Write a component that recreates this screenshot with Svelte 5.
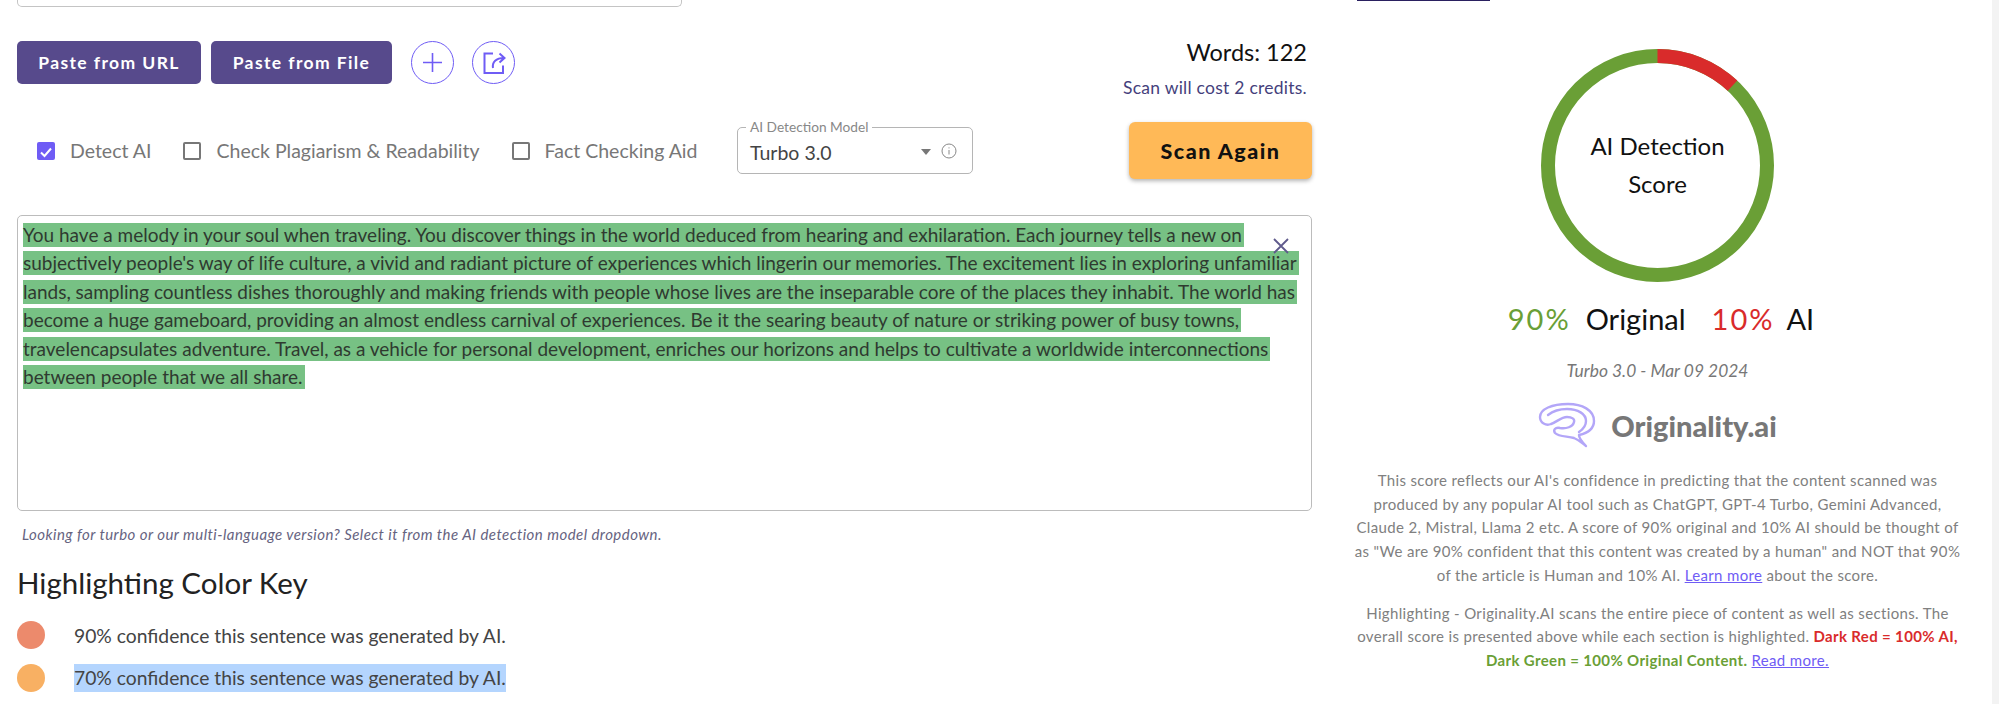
<script>
  const lines = [
    "You have a melody in your soul when traveling. You discover things in the world deduced from hearing and exhilaration. Each journey tells a new on",
    "subjectively people's way of life culture, a vivid and radiant picture of experiences which lingerin our memories. The excitement lies in exploring unfamiliar",
    "lands, sampling countless dishes thoroughly and making friends with people whose lives are the inseparable core of the places they inhabit. The world has",
    "become a huge gameboard, providing an almost endless carnival of experiences. Be it the searing beauty of nature or striking power of busy towns,",
    "travelencapsulates adventure. Travel, as a vehicle for personal development, enriches our horizons and helps to cultivate a worldwide interconnections",
    "between people that we all share."
  ];
  const options = [
    { label: "Detect AI", checked: true },
    { label: "Check Plagiarism & Readability", checked: false },
    { label: "Fact Checking Aid", checked: false }
  ];
  // donut: red slice from the top
  const r = 109.5;
  const circ = 2 * Math.PI * r;
</script>

<div class="page">
  <main class="left">
    <div class="top-box"></div>

    <div class="toolbar">
      <div class="actions">
        <button class="paste url">Paste from URL</button>
        <button class="paste file">Paste from File</button>
        <button class="round plus" aria-label="Add">
          <svg viewBox="0 0 43 43" width="43" height="43"><path d="M21.5 12v19M12 21.5h19" /></svg>
        </button>
        <button class="round share" aria-label="Share">
          <svg viewBox="0 0 43 43" width="43" height="43">
            <path d="M21 12.5h-8.5v19.5h18.5v-7.5" />
            <path d="M21 27c-1-6 3-10 11-10M27.5 12.5l5 4.5-5 4.5" />
          </svg>
        </button>
      </div>
      <div class="counts">
        <div class="words">Words: 122</div>
        <div class="cost">Scan will cost 2 credits.</div>
      </div>
    </div>

    <div class="options">
      <div class="checks">
        {#each options as o}
          <label class="check">
            <span class="box" class:on={o.checked}>
              {#if o.checked}
                <svg viewBox="0 0 18 18" width="18" height="18"><path d="M4 9.5l3.5 3.5L14 5.5" /></svg>
              {/if}
            </span>
            {o.label}
          </label>
        {/each}
      </div>
      <div class="model">
        <span class="legend">AI Detection Model</span>
        <span class="value">Turbo 3.0</span>
        <span class="caret"></span>
        <svg class="info" viewBox="0 0 16 16" width="16" height="16">
          <circle cx="8" cy="8" r="7" />
          <path d="M8 7v4.5M8 4.4v1" />
        </svg>
      </div>
      <button class="scan">Scan Again</button>
    </div>

    <div class="editor">
      <svg class="close" viewBox="0 0 16 16" width="16" height="16"><path d="M1 1l14 14M15 1L1 15" /></svg>
      {#each lines as line}
        <div class="line"><span>{line}</span></div>
      {/each}
    </div>

    <p class="hint">Looking for turbo or our multi-language version? Select it from the AI detection model dropdown.</p>

    <h2>Highlighting Color Key</h2>
    <div class="key">
      <span class="dot red"></span>
      <span>90% confidence this sentence was generated by AI.</span>
    </div>
    <div class="key">
      <span class="dot orange"></span>
      <span class="selected">70% confidence this sentence was generated by AI.</span>
    </div>
  </main>

  <aside class="right">
    <div class="top-rule"></div>
    <div class="donut">
      <svg viewBox="0 0 233 233" width="233" height="233">
        <circle cx="116.5" cy="116.5" r={r} class="ring green" />
        <circle cx="116.5" cy="116.5" r={r} class="ring red" stroke-dasharray="{circ * 0.12} {circ}" />
      </svg>
      <div class="donut-label">AI Detection<br />Score</div>
    </div>
    <div class="score">
      <span class="pct g">90%</span><span class="name">Original</span>
      <span class="pct r">10%</span><span class="name">AI</span>
    </div>
    <div class="stamp">Turbo 3.0 - Mar 09 2024</div>
    <div class="logo">
      <svg viewBox="0 0 58 46" width="58" height="46">
        <path d="M48 44C44 40 41 36 41 33 50 31 56 27 56 19 56 8 44 2 30 2 14 2 2 7 2 15 2 21 8 24 13 22 19 20 23 15 29 15 34 15 37 17 36 20 35 25 28 27 22 26 17 25 15 28 17 31 21 35 30 34 36 36 41 38 44 41 48 44Z" />
        <path d="M10 13C15 9 22 7 29 7 40 7 48 12 48 19 48 25 44 28 41 30" />
      </svg>
      <span>Originality.ai</span>
    </div>
    <p class="blurb first">This score reflects our AI's confidence in predicting that the content scanned was<br />produced by any popular AI tool such as ChatGPT, GPT-4 Turbo, Gemini Advanced,<br />Claude 2, Mistral, Llama 2 etc. A score of 90% original and 10% AI should be thought of<br />as "We are 90% confident that this content was created by a human" and NOT that 90%<br />of the article is Human and 10% AI. <a href="#more">Learn more</a> about the score.</p>
    <p class="blurb">Highlighting - Originality.AI scans the entire piece of content as well as sections. The<br />overall score is presented above while each section is highlighted. <b class="r">Dark Red = 100% AI,</b><br /><b class="g">Dark Green = 100% Original Content.</b> <a href="#more">Read more.</a></p>
  </aside>
  <div class="scrollbar"></div>
</div>

<style>
  :global(body) {
    background: #fff;
    overflow: hidden;
  }

  .page {
    display: flex;
    height: 704px;
    width: 1999px;
    font-family: "Lato", "Liberation Sans", sans-serif;
    color: #333;
    overflow: hidden;
  }

  .left {
    width: 1295px;
    margin-left: 17px;
    flex: none;
  }

  .top-box {
    height: 7px;
    width: 665px;
    border: 1px solid #c4c4c4;
    border-top: none;
    border-radius: 0 0 5px 5px;
    box-sizing: border-box;
  }

  .toolbar {
    display: flex;
    justify-content: space-between;
    margin-top: 34px;
    height: 81px;
  }

  .actions {
    display: flex;
    gap: 10px;
    height: 43px;
  }

  button {
    font-family: inherit;
    cursor: pointer;
  }

  .paste {
    height: 43px;
    background: #574a8c;
    color: #fff;
    border: none;
    border-radius: 5px;
    font-size: 17.5px;
    font-weight: 700;
    letter-spacing: 1.4px;
    padding: 0;
  }
  .url { width: 184px; }
  .file { width: 181px; }

  .round {
    width: 43px;
    height: 43px;
    padding: 0;
    border: 1px solid #6f5cf5;
    border-radius: 50%;
    background: #fff;
    box-sizing: border-box;
    display: flex;
    align-items: center;
    justify-content: center;
  }
  .plus { margin-left: 9px; }
  .share { margin-left: 8px; }
  .round svg { flex: none; }
  .round path {
    fill: none;
    stroke: #6f5cf5;
    stroke-width: 1.6;
  }
  .share path { stroke-width: 2; }

  .counts {
    text-align: right;
    padding-right: 5px;
  }
  .words {
    font-size: 23.5px;
    line-height: 30px;
    margin-top: -4px;
    color: #111;
  }
  .cost {
    font-size: 17.5px;
    line-height: 20px;
    letter-spacing: 0.25px;
    margin-top: 11px;
    color: #453f7c;
  }

  .options {
    display: flex;
    align-items: center;
    height: 57px;
  }
  .checks {
    display: flex;
    margin-left: 20px;
    width: 700px;
    gap: 32px;
  }
  .check {
    display: flex;
    align-items: center;
    gap: 15px;
    font-size: 19.5px;
    color: #777;
  }
  .box {
    width: 18px;
    height: 18px;
    box-sizing: border-box;
    border: 2px solid #777;
    border-radius: 2px;
    flex: none;
  }
  .box.on {
    background: #6f5cf5;
    border: none;
  }
  .box path {
    fill: none;
    stroke: #fff;
    stroke-width: 2;
  }

  .model {
    position: relative;
    width: 236px;
    height: 47px;
    box-sizing: border-box;
    border: 1px solid #b5b5b5;
    border-radius: 5px;
    display: flex;
    align-items: center;
    padding: 4px 0 0 12px;
    margin-top: -1px;
  }
  .legend {
    position: absolute;
    top: -9px;
    left: 8px;
    background: #fff;
    padding: 0 4px;
    font-size: 13.7px;
    line-height: 16px;
    color: #888;
  }
  .value {
    font-size: 19.5px;
    color: #444;
  }
  .caret {
    position: absolute;
    right: 41px;
    top: 21px;
    border: 5px solid transparent;
    border-top: 6px solid #777;
    border-bottom: none;
  }
  .info {
    position: absolute;
    right: 15px;
    top: 15px;
    fill: none;
    stroke: #888;
    stroke-width: 1;
  }

  .scan {
    margin-left: 156px;
    width: 183px;
    height: 57px;
    border: none;
    border-radius: 6px;
    background: #ffb957;
    color: #111;
    font-size: 21.5px;
    font-weight: 900;
    letter-spacing: 1.5px;
    box-shadow: 0 2px 4px rgba(0, 0, 0, 0.3);
  }

  .editor {
    position: relative;
    margin-top: 36px;
    width: 1295px;
    height: 296px;
    box-sizing: border-box;
    border: 1px solid #bcbcbc;
    border-radius: 5px;
    padding: 7px 5px;
    font-size: 19px;
    color: #2f3a30;
  }
  .line {
    height: 28.4px;
    white-space: nowrap;
    line-height: 24px;
  }
  .line span {
    display: inline-block;
    background: #77c184;
    height: 24px;
    padding: 0 2px 0 0;
  }
  .close {
    position: absolute;
    right: 22px;
    top: 22px;
    fill: none;
    stroke: #5f5a8c;
    stroke-width: 1.8;
    z-index: 1;
  }

  .hint {
    margin: 14px 0 0 5px;
    font-size: 15px;
    line-height: 18px;
    font-style: italic;
    color: #66637f;
    letter-spacing: 0.45px;
  }

  h2 {
    margin: 22px 0 0 0;
    font-size: 29.5px;
    font-weight: 400;
    line-height: 36px;
    color: #222;
  }

  .key {
    display: flex;
    align-items: center;
    gap: 29px;
    height: 28px;
    font-size: 19.3px;
    color: #444;
    margin-top: 15px;
  }
  h2 + .key { margin-top: 20px; }
  .dot {
    width: 28px;
    height: 28px;
    border-radius: 50%;
    flex: none;
  }
  .dot.red { background: #ec8a6c; }
  .dot.orange { background: #f8b063; }
  .selected {
    background: #b4d5fe;
    line-height: 28px;
  }

  .right {
    position: relative;
    width: 641px;
    margin-left: 25px;
    flex: none;
    text-align: center;
  }
  .top-rule {
    width: 133px;
    height: 2px;
    background: #2a2060;
    margin-left: 20px;
    position: absolute;
    top: -1px;
  }
  .donut {
    position: relative;
    width: 233px;
    height: 233px;
    margin: 49px auto 0;
  }
  .ring {
    fill: none;
    stroke-width: 14;
    transform: rotate(-90deg);
    transform-origin: center;
  }
  .ring.green { stroke: #6a9f36; }
  .ring.red { stroke: #d92b2b; }
  .donut-label {
    position: absolute;
    inset: 0;
    display: flex;
    align-items: center;
    justify-content: center;
    text-align: center;
    font-size: 24px;
    line-height: 38px;
    color: #111;
    padding-bottom: 2px;
    box-sizing: border-box;
  }

  .score {
    display: flex;
    justify-content: center;
    margin-top: 19px;
    padding-left: 7px;
    font-size: 29px;
    line-height: 36px;
    color: #111;
  }
  .pct { letter-spacing: 2px; }
  .score .name { margin-left: 15px; margin-right: 26px; }
  .score .name:last-child { margin-right: 0; margin-left: 12px; }
  .g { color: #6a9f36; }
  .r { color: #d92b2b; }

  .stamp {
    margin-top: 24px;
    font-size: 17.4px;
    line-height: 20px;
    font-style: italic;
    color: #777;
  }

  .logo {
    display: flex;
    justify-content: center;
    align-items: center;
    gap: 15px;
    margin-top: 21px;
    height: 46px;
    font-size: 29px;
    font-weight: 900;
    color: #777;
  }
  .logo path {
    fill: none;
    stroke: #b3a6f8;
    stroke-width: 2.4;
    stroke-linecap: round;
    stroke-linejoin: round;
  }

  .blurb {
    margin: 14px 0 0;
    font-size: 15px;
    line-height: 23.7px;
    color: #808080;
    letter-spacing: 0.35px;
    white-space: nowrap;
  }
  .blurb.first { margin-top: 21px; }
  .blurb a { color: #6f5cf5; }
  .blurb b { font-weight: 700; }

  .scrollbar {
    width: 7px;
    margin-left: auto;
    flex: none;
    background: #f3f3f3;
  }
</style>
